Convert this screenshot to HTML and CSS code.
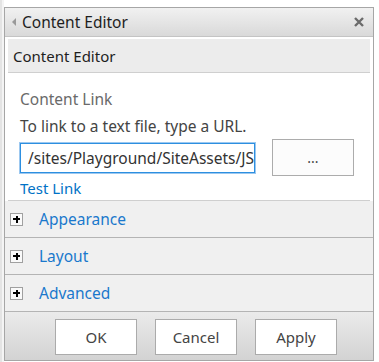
FILE: index.html
```html
<!DOCTYPE html>
<html>
    <head>
        <title>Content Editor</title>
        <link rel="stylesheet" href="styles.css">
    </head>
    <body>
        <div class="page">
            <div class="strip"></div>
            <div class="panel">
                <div class="header">
                    <span class="arrow"></span>
                    <span class="title">Content Editor</span>
                    <svg class="close" width="10" height="10" viewBox="0 0 10 10">
                        <path d="M1 1L9 9M9 1L1 9" stroke="#6b6b6b" stroke-width="2.4"/>
                    </svg>
                </div>
                <div class="body">
                    <div class="section-title">Content Editor</div>
                    <div class="content">
                        <p class="label">Content Link</p>
                        <p class="hint">To link to a text file, type a URL.</p>
                        <div class="row">
                            <div class="input"><span class="caret"></span>/sites/Playground/SiteAssets/JS</div>
                            <button class="browse">...</button>
                        </div>
                        <a class="test" href="#">Test Link</a>
                    </div>
                </div>
                <div class="groups">
                    <div class="group"><span class="plus"></span><a href="#">Appearance</a></div>
                    <div class="group"><span class="plus"></span><a href="#">Layout</a></div>
                    <div class="group"><span class="plus"></span><a href="#">Advanced</a></div>
                </div>
                <div class="footer">
                    <button>OK</button>
                    <button>Cancel</button>
                    <button>Apply</button>
                </div>
            </div>
        </div>
    </body>
</html>
```

FILE: styles.css
```css
body{
    margin: 0;
    background-color: white;
    font-family: "Noto Sans", "Open Sans", sans-serif;
}
.page{
    display: flex;
    align-items: flex-start;
    height: 362px;
    overflow: hidden;
}
.strip{
    width: 4px;
    height: 362px;
    background: linear-gradient(to right, #e4e4e4 0, #e4e4e4 2px, #f4f4f4 2px, #f4f4f4 4px);
}
.panel{
    margin-top: 7px;
    width: 368px;
    border: 1px solid #a6a6a6;
    display: flex;
    flex-direction: column;
}
.header{
    height: 29px;
    display: flex;
    align-items: center;
    background: linear-gradient(#f1f1f1, #d9d9d9);
    border-bottom: 1px solid #c4c4c4;
    padding: 0 9px 0 7px;
    box-sizing: border-box;
}
.arrow{
    width: 0;
    height: 0;
    border-top: 4px solid transparent;
    border-bottom: 4px solid transparent;
    border-right: 4px solid #9a9a9a;
    margin-right: 6px;
}
.title{
    font-size: 15.5px;
    color: #1e1e1e;
    flex: 1;
}
.body{
    padding: 2px 3px 0 3px;
}
.section-title{
    height: 33px;
    background-color: #ececec;
    border-bottom: 1px solid #cfcfcf;
    font-size: 15px;
    color: #1e1e1e;
    display: flex;
    align-items: center;
    padding-left: 5px;
}
.content{
    padding: 15px 0 0 12px;
    height: 128px;
    box-sizing: border-box;
    border-bottom: 1px solid #cfcfcf;
}
.content p{
    margin: 0;
    font-size: 15.5px;
}
.label{
    color: #6a6a6a;
    margin-bottom: 5px !important;
}
.hint{
    color: #444;
}
.row{
    display: flex;
    align-items: center;
    margin-top: 2px;
}
.input{
    width: 226px;
    height: 28px;
    border: 1px solid #2d8fe0;
    box-shadow: 0 0 0 1px #9cc8f0;
    font-size: 15.5px;
    color: #333;
    white-space: nowrap;
    overflow: hidden;
    display: flex;
    align-items: center;
    padding-left: 7px;
    box-sizing: content-box;
}
.caret{
    width: 1px;
    height: 18px;
    background-color: #222;
}
.browse{
    margin-left: 17px;
    width: 82px;
    height: 37px;
    border: 1px solid #acacac;
    background-color: #fcfcfc;
    color: #444;
    font-family: inherit;
    font-size: 14px;
}
.test{
    display: block;
    margin-top: 2px;
    font-size: 15px;
    color: #0072c6;
    text-decoration: none;
}
.groups{
    background-color: #f0f0f0;
}
.group{
    height: 36px;
    border-bottom: 1px solid #b4b4b4;
    display: flex;
    align-items: center;
    padding-left: 5px;
}
.group a{
    font-size: 15.5px;
    color: #1a78cc;
    text-decoration: none;
}
.plus{
    width: 13px;
    height: 13px;
    border: 1px solid #a0a0a0;
    box-sizing: border-box;
    background: linear-gradient(#000, #000) center/7px 2px no-repeat, linear-gradient(#000, #000) center/2px 7px no-repeat, #fafafa;
    margin-right: 16px;
}
.footer{
    height: 48px;
    background: linear-gradient(#ebebeb, #d3d3d3);
    display: flex;
    align-items: center;
    gap: 18px;
    padding: 2px 0 0 50px;
    box-sizing: border-box;
}
.footer button{
    width: 82px;
    height: 36px;
    border: 1px solid #ababab;
    background-color: white;
    font-family: inherit;
    font-size: 15px;
    color: #444;
}
```
